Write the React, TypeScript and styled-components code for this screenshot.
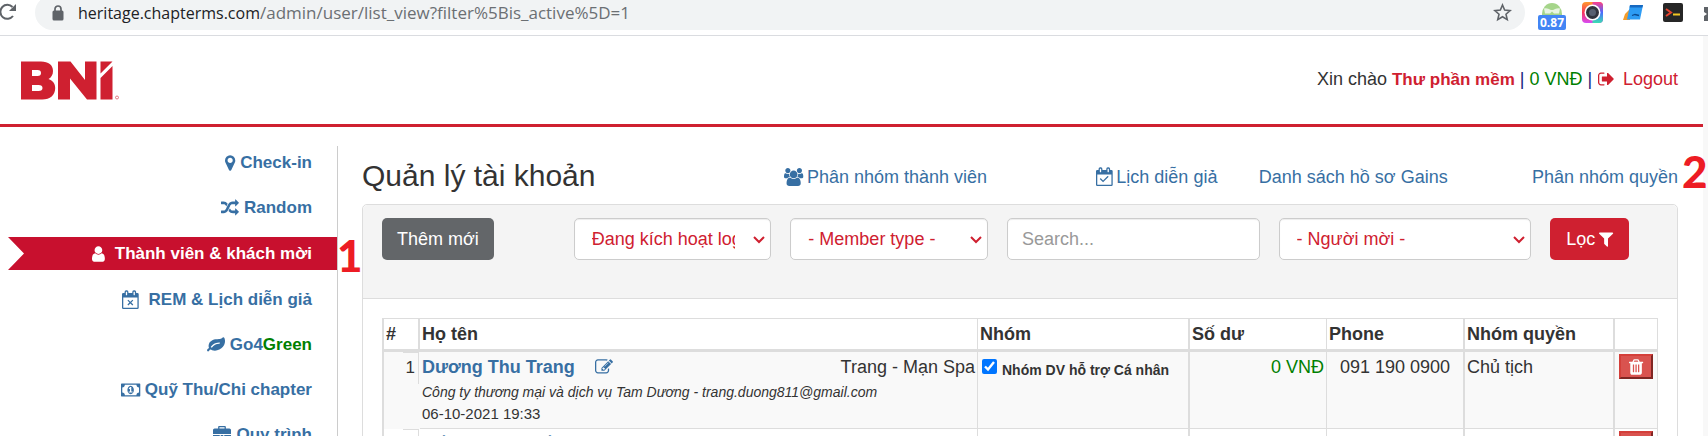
import React from 'react';
import styled, { createGlobalStyle, css } from 'styled-components';

const GlobalStyle = createGlobalStyle`
  *, *::before, *::after { box-sizing: border-box; }
  html, body { margin: 0; height: 100%; overflow: hidden; background: #fff; }
  body {
    font-family: "Liberation Sans", Arial, sans-serif;
    font-size: 18px;
    line-height: 26px;
    color: #333;
  }
  #root { height: 100%; }
  a { color: #376fa3; text-decoration: none; }
`;

/* ---------- icons ---------- */

const GLYPHS = {
  marker: [384, 1024, 'M1152 640q0-106-75-181t-181-75-181 75-75 181 75 181 181 75 181-75 75-181zm256 0q0 109-33 179l-364 774q-16 33-47.5 52t-67.5 19-67.5-19-46.5-52l-365-774q-33-70-33-179 0-212 150-362t362-150 362 150 150 362z'],
  random: [0, 1792, 'M666 481q-60 92-137 273-22-45-37-72.5t-40.5-63.5-51-56.5-63-35-81.5-14.5h-224q-14 0-23-9t-9-23v-192q0-14 9-23t23-9h224q250 0 410 225zm1126 799q0 14-9 23l-320 320q-9 9-23 9-13 0-22.5-9.5t-9.5-22.5v-192q-32 0-85 .5t-81 1-73-1-71-5-64-10.5-63-18.5-58-28.5-59-40-55-53.5-56-69.5q59-93 136-273 22 45 37 72.5t40.5 63.5 51 56.5 63 35 81.5 14.5h256v-192q0-14 9-23t23-9q12 0 24 10l319 319q9 9 9 23zm0-896q0 14-9 23l-320 320q-9 9-23 9-13 0-22.5-9.5t-9.5-22.5v-192h-256q-48 0-87 15t-69 45-51 61.5-45 77.5q-32 62-78 171-29 66-49.5 111t-54 105-64 100-74 83-90 68.5-106.5 42-128 16.5h-224q-14 0-23-9t-9-23v-192q0-14 9-23t23-9h224q48 0 87-15t69-45 51-61.5 45-77.5q32-62 78-171 29-66 49.5-111t54-105 64-100 74-83 90-68.5 106.5-42 128-16.5h256v-192q0-14 9-23t23-9q12 0 24 10l319 319q9 9 9 23z'],
  user: [256, 1280, 'M1536 1399q0 109-62.5 187t-150.5 78h-854q-88 0-150.5-78t-62.5-187q0-85 8.5-160.5t31.5-152 58.5-131 94-89 134.5-34.5q131 128 313 128t313-128q76 0 134.5 34.5t94 89 58.5 131 31.5 152 8.5 160.5zm-256-887q0 159-112.5 271.5t-271.5 112.5-271.5-112.5-112.5-271.5 112.5-271.5 271.5-112.5 271.5 112.5 112.5 271.5z'],
  users: [-64, 1920, 'M529 896q-162 5-265 128h-134q-82 0-138-40.5t-56-118.5q0-353 124-353 6 0 43.5 21t97.5 42.5 119 21.5q67 0 133-23-5 37-5 66 0 139 81 256zm1071 637q0 120-73 189.5t-194 69.5h-874q-121 0-194-69.5t-73-189.5q0-53 3.5-103.5t14-109 26.5-108.5 43-97.5 62-81 85.5-53.5 111.5-20q10 0 43 21.5t73 48 107 48 135 21.5 135-21.5 107-48 73-48 43-21.5q61 0 111.5 20t85.5 53.5 62 81 43 97.5 26.5 108.5 14 109 3.5 103.5zm-1024-1277q0 106-75 181t-181 75-181-75-75-181 75-181 181-75 181 75 75 181zm704 384q0 159-112.5 271.5t-271.5 112.5-271.5-112.5-112.5-271.5 112.5-271.5 271.5-112.5 271.5 112.5 112.5 271.5zm576 225q0 78-56 118.5t-138 40.5h-134q-103-123-265-128 81-117 81-256 0-29-5-66 66 23 133 23 59 0 119-21.5t97.5-42.5 43.5-21q124 0 124 353zm-128-609q0 106-75 181t-181 75-181-75-75-181 75-181 181-75 181 75 75 181z'],
  leaf: [0, 1792, 'M1280 704q0-26-19-45t-45-19q-172 0-318 49.5t-259.5 134-235.5 219.5q-19 21-19 45 0 26 19 45t45 19q24 0 45-19 27-24 74-71t67-66q137-124 268.5-176t313.5-52q26 0 45-19t19-45zm512-198q0 95-20 193-46 224-184.5 383t-357.5 268q-214 108-438 108-148 0-286-47-15-5-88-42t-96-37q-16 0-39.5 32t-45 70-52.5 70-60 32q-43 0-63.5-17.5t-45.5-59.5q-2-4-6-11t-5.5-10-3-9.5-1.5-13.5q0-35 31-73.5t68-65.5 68-56 31-48q0-4-14-38t-16-44q-9-51-9-104 0-115 43.5-220t119-184.5 170.5-139 204-95.5q55-18 145-25.5t179.5-9 178.5-6 163.5-24 113.5-56.5l29.5-29.5 29.5-28 27-20 36.5-16 43.5-4.5q39 0 70.5 46t47.5 112 24 124 8 96z'],
  briefcase: [0, 1792, 'M640 256h512v-128h-512v128zm1152 640v480q0 66-47 113t-113 47h-1472q-66 0-113-47t-47-113v-480h672v160q0 26 19 45t45 19h320q26 0 45-19t19-45v-160h672zm-768 0v128h-256v-128h256zm768-480v384h-1792v-384q0-66 47-113t113-47h352v-160q0-40 28-68t68-28h576q40 0 68 28t28 68v160h352q66 0 113 47t47 113z'],
  signOut: [64, 1664, 'M704 1440q0 4 1 20t.5 26.5-3 23.5-10 19.5-20.5 6.5h-320q-119 0-203.5-84.5t-84.5-203.5v-704q0-119 84.5-203.5t203.5-84.5h320q13 0 22.5 9.5t9.5 22.5q0 4 1 20t.5 26.5-3 23.5-10 19.5-20.5 6.5h-320q-66 0-113 47t-47 113v704q0 66 47 113t113 47h312l11.5 1 11.5 3 8 5.5 7 9 2 13.5zm928-544q0 26-19 45l-544 544q-19 19-45 19t-45-19-19-45v-288h-448q-26 0-45-19t-19-45v-384q0-26 19-45t45-19h448v-288q0-26 19-45t45-19 45 19l544 544q19 19 19 45z'],
  pencil: [0, 1792, 'M888 1184l116-116-152-152-116 116v56h96v96h56zm440-720q-16-16-33 1l-350 350q-17 17-1 33t33-1l350-350q17-17 1-33zm80 594v190q0 119-84.5 203.5t-203.5 84.5h-832q-119 0-203.5-84.5t-84.5-203.5v-832q0-119 84.5-203.5t203.5-84.5h832q63 0 117 25 15 7 18 23 3 17-9 29l-49 49q-14 14-32 8-23-6-45-6h-832q-66 0-113 47t-47 113v832q0 66 47 113t113 47h832q66 0 113-47t47-113v-126q0-13 9-22l64-64q15-15 35-7t20 29zm-96-738l288 288-672 672h-288v-288zm444 132l-92 92-288-288 92-92q28-28 68-28t68 28l152 152q28 28 28 68t-28 68z'],
  filter: [192, 1408, 'M1595 295q17 41-14 70l-493 493v742q0 42-39 59-13 5-25 5-27 0-45-19l-256-256q-19-19-19-45v-486l-493-493q-31-29-14-70 17-39 59-39h1280q42 0 59 39z'],
  trash: [192, 1408, 'M704 1376v-704q0-14-9-23t-23-9h-64q-14 0-23 9t-9 23v704q0 14 9 23t23 9h64q14 0 23-9t9-23zm256 0v-704q0-14-9-23t-23-9h-64q-14 0-23 9t-9 23v704q0 14 9 23t23 9h64q14 0 23-9t9-23zm256 0v-704q0-14-9-23t-23-9h-64q-14 0-23 9t-9 23v704q0 14 9 23t23 9h64q14 0 23-9t9-23zm-544-992h448l-48-117q-7-9-17-11h-317q-10 2-17 11zm928 32v64q0 14-9 23t-23 9h-96v948q0 83-47 143.5t-113 60.5h-832q-66 0-113-58.5t-47-141.5v-952h-96q-14 0-23-9t-9-23v-64q0-14 9-23t23-9h309l70-167q15-37 54-63t79-26h320q40 0 79 26t54 63l70 167h309q14 0 23 9t9 23z'],
  calendarX: [64, 1664, 'M192 1664h1408v-1024h-1408zM576 384v-288q0-32-32-32h-64q-32 0-32 32v288q0 32 32 32h64q32 0 32-32zm768 0v-288q0-32-32-32h-64q-32 0-32 32v288q0 32 32 32h64q32 0 32-32zm384-64v1344q0 128-128 128h-1408q-128 0-128-128v-1344q0-128 128-128h128v-96q0-160 160-160h64q160 0 160 160v96h384v-96q0-160 160-160h64q160 0 160 160v96h128q128 0 128 128zM694 860l202 200 202-200 90 90-200 202 200 202-90 90-202-200-202 200-90-90 200-202-200-202z'],
  calendarCheck: [64, 1664, 'M192 1664h1408v-1024h-1408zM576 384v-288q0-32-32-32h-64q-32 0-32 32v288q0 32 32 32h64q32 0 32-32zm768 0v-288q0-32-32-32h-64q-32 0-32 32v288q0 32 32 32h64q32 0 32-32zm384-64v1344q0 128-128 128h-1408q-128 0-128-128v-1344q0-128 128-128h128v-96q0-160 160-160h64q160 0 160 160v96h384v-96q0-160 160-160h64q160 0 160 160v96h128q128 0 128 128zM1303 892l-512 512q-10 9-23 9t-23-9l-288-288q-9-10-9-23t9-22l46-46q9-9 22-9t23 9l220 220 444-444q10-9 23-9t22 9l46 46q9 9 9 22t-9 23z'],
  money: [-64, 1920, 'M704 1152h384v-96h-128v-448h-114l-148 137 77 80q42-37 55-57h2v288h-128zm512-256q0 70-21 142t-59.5 134-101.5 101-138 39-138-39-101.5-101-59.5-134-21-142 21-142 59.5-134 101.5-101 138-39 138 39 101.5 101 59.5 134 21 142zm512 256v-512q-106 0-181-75t-75-181h-1152q0 106-75 181t-181 75v512q106 0 181 75t75 181h1152q0-106 75-181t181-75zm128-832v1152q0 26-19 45t-45 19h-1792q-26 0-45-19t-19-45v-1152q0-26 19-45t45-19h1792q26 0 45 19t19 45z'],
} as const;

type GlyphName = keyof typeof GLYPHS;

const Svg = styled.svg`
  display: inline-block;
  flex: none;
  height: 18px;
  width: auto;
  fill: currentColor;
  vertical-align: -3px;
  overflow: visible;
`;

function Icon({ name }: { name: GlyphName }) {
  const [x, w, d] = GLYPHS[name];
  return (
    <Svg viewBox={`${x} 0 ${w} 1792`} aria-hidden="true">
      <path d={d} fillRule="evenodd" />
    </Svg>
  );
}

/* ---------- browser bar ---------- */

const BrowserBar = styled.div`
  display: flex;
  align-items: flex-end;
  height: 36px;
  padding-bottom: 5px;
  border-bottom: 1px solid #dadce0;
  overflow: hidden;
  background: #fff;
`;

const Reload = styled.button`
  flex: none;
  width: 35px;
  height: 35px;
  padding: 0;
  border: 0;
  background: none;
  text-align: left;
  svg { display: block; }
`;

const AddressPill = styled.div`
  flex: 1;
  display: flex;
  align-items: center;
  height: 35px;
  padding: 0 13px 0 17px;
  border-radius: 18px;
  background: #f1f3f4;
`;

const Address = styled.div`
  flex: 1;
  margin-left: 14px;
  font-family: "Open Sans", "Segoe UI", sans-serif;
  font-size: 17px;
  line-height: 24px;
  color: #6b6f73;
  white-space: nowrap;
  b { font-size: 16px; font-weight: 400; color: #202124; }
`;

const Extensions = styled.div`
  flex: none;
  display: flex;
  gap: 20px;
  width: 183px;
  height: 30px;
  padding-left: 13px;
  overflow: hidden;
  svg { display: block; flex: none; }
`;

const Badged = styled.div`
  flex: none;
  width: 24px;
`;

function Browser() {
  return (
    <BrowserBar>
      <Reload aria-label="Reload">
        <svg width="18" height="35" viewBox="0 0 18 35" fill="none" stroke="#5f6368" strokeWidth="2">
          <path d="M12.500 12A7 7 0 1 0 13 21" />
          <path d="M16 9v7H9z" fill="#5f6368" stroke="none" />
        </svg>
      </Reload>
      <AddressPill>
        <svg width="12" height="16" viewBox="0 0 12 16" fill="none">
          <rect x="0.5" y="5.5" width="11" height="10" rx="1.5" fill="#5f6368" />
          <path d="M3 6V4a3 3 0 0 1 6 0v2" stroke="#5f6368" strokeWidth="1.7" />
        </svg>
        <Address><b>heritage.chapterms.com</b>/admin/user/list_view?filter%5Bis_active%5D=1</Address>
        <svg width="19" height="19" viewBox="0 0 24 24" fill="none" stroke="#5f6368" strokeWidth="2">
          <path d="M12 2.500l2.700 6.500 7 .6-5.300 4.600 1.600 6.800-6-3.600-6 3.600 1.600-6.800-5.300-4.600 7-.6z" />
        </svg>
      </AddressPill>
      <Extensions>
        <Badged>
          <svg width="28" height="30" viewBox="0 0 28 30">
            <path d="M4 14a10 11 0 0 1 20 0v2H4z" fill="#a5d58a" />
            <path d="M6 8.500q3-1 7 1.500h2q4-2.500 7-1.500l-1 5h-5l-2-2-2 2H7z" fill="#fff" opacity=".75" />
            <rect y="15" width="28" height="15" rx="2" fill="#4285f4" />
            <text x="14" y="27" textAnchor="middle" fontSize="12" fontWeight="700" fontFamily="Open Sans, sans-serif" fill="#fff">0.87</text>
          </svg>
        </Badged>
        <svg width="21" height="24" viewBox="0 0 21 24">
          <defs>
            <linearGradient id="lensWarm" x1="0" y1="0" x2="0" y2="1">
              <stop offset="0" stopColor="#ff9a2e" />
              <stop offset=".5" stopColor="#f8345c" />
              <stop offset="1" stopColor="#d64cf5" />
            </linearGradient>
            <linearGradient id="lensCool" x1="0" y1="0" x2="0" y2="1">
              <stop offset="0" stopColor="#ff3d8b" />
              <stop offset=".5" stopColor="#4a6bff" />
              <stop offset="1" stopColor="#3be0b0" />
            </linearGradient>
          </defs>
          <rect y="2" width="21" height="21" rx="4" fill="url(#lensWarm)" />
          <path d="M10.500 2H17a4 4 0 0 1 4 4v13a4 4 0 0 1-4 4h-6.500z" fill="url(#lensCool)" />
          <circle cx="10.5" cy="12.5" r="8" fill="#fff" />
          <circle cx="10.5" cy="12.5" r="6.5" fill="#30343d" />
          <circle cx="10.5" cy="12.5" r="3.5" fill="#566070" />
        </svg>
        <svg width="20" height="24" viewBox="0 0 20 24">
          <path d="M0 20l2-6 5-5v11z" fill="#f39c2b" />
          <path d="M7 5h13l-3 14.500H4z" fill="#2d9cf4" />
          <path d="M7 5h13l-.6 2.500H6.500z" fill="#1769c0" />
          <path d="M9 15.500l3-1 4 1" fill="none" stroke="#0b4a8f" strokeWidth="1.300" />
        </svg>
        <svg width="20" height="24" viewBox="0 0 20 24">
          <rect y="3" width="20" height="19" rx="2" fill="#262626" />
          <path d="M3 9l5 3.500L3 16" fill="none" stroke="#e8432e" strokeWidth="2" />
          <path d="M10 14.500h7" stroke="#f3c623" strokeWidth="2" />
        </svg>
        <svg width="5" height="24" viewBox="0 0 5 24" fill="#5f6368">
          <path d="M1 7h4v14H1v-5l3-2-3-2z" />
        </svg>
      </Extensions>
    </BrowserBar>
  );
}

/* ---------- page frame ---------- */

const Screen = styled.div`
  display: flex;
  flex-direction: column;
  height: 100%;
  overflow: hidden;
`;

const Page = styled.div`
  flex: 1;
  min-height: 0;
  overflow: hidden;
  padding-right: 5px;
  box-shadow: inset -5px 0 #f8f8f8;
`;

const Header = styled.header`
  display: flex;
  align-items: center;
  justify-content: space-between;
  height: 91px;
  padding: 0 25px 0 21px;
  border-bottom: 3px solid #cf2030;
`;

const Greeting = styled.div`
  margin-bottom: 2px;
  white-space: nowrap;
  a { color: #cf2030; }
  b { font-size: 17px; }
  svg { margin: 0 3px 0 1px; }
`;

const Money = styled.span`
  color: green;
`;

const Bar = styled.span`
  color: #1a237e;
`;

function Logo() {
  return (
    <svg width="98" height="39" viewBox="0 0 98 39" role="img" aria-label="BNI">
      <g fill="#cf2030">
        <path fillRule="evenodd" d="M0 .5h20c7.500 0 12 3.500 12 9.500 0 3.800-1.700 6.500-4.500 8 4.500 1.500 6.700 4.800 6.700 9 0 7-5 11.500-13 11.500H0zM11 9v6h5.500c2.500 0 3.500-1 3.500-3S19 9 16.500 9zM11 24v6h6.500c2.800 0 4-1 4-3s-1.200-3-4-3z" />
        <path d="M37 .5H49.500L64 19V.5h11.500v38H66L49 17.500v21H37z" />
        <path d="M79.500 .5h12L79.500 12.500zM91.500 5v33.500H79.500V17z" />
        <circle cx="96" cy="36.500" r="1.500" fill="none" stroke="#cf2030" strokeWidth=".8" opacity=".7" />
      </g>
    </svg>
  );
}

const Columns = styled.div`
  display: flex;
  align-items: flex-start;
  padding-top: 19px;
`;

/* ---------- side menu ---------- */

const SideMenu = styled.nav`
  position: relative;
  flex: none;
  display: flex;
  flex-direction: column;
  gap: 12px;
  width: 338px;
  padding-left: 8px;
  border-right: 1px solid #ccc;
  font-weight: 700;
`;

const MenuLink = styled.a<{ $active?: boolean; $wide?: boolean }>`
  display: flex;
  align-items: center;
  justify-content: flex-end;
  gap: ${(p) => (p.$wide ? 10 : 5)}px;
  height: 33px;
  padding-right: 25px;
  flex: none;
  font-size: 17px;
  ${(p) => p.$active && css`
    margin: 1px 0;
    color: #fff;
    background: #c8102e;
    clip-path: polygon(0 0, 100% 0, 100% 100%, 0 100%, 16px 50%);
  `}
`;

const Marker = styled.span<{ $side: 'menu' | 'links' }>`
  position: absolute;
  font-family: Lato, Calibri, sans-serif;
  font-weight: 900;
  font-size: 44px;
  line-height: 44px;
  color: #ed1c24;
  ${(p) => (p.$side === 'menu' ? 'left: 337px; top: 87px;' : 'left: 100%; top: -7px; margin-left: 4px;')}
`;

/* ---------- main area ---------- */

const Main = styled.main`
  flex: 1;
  min-width: 0;
  padding: 10px 25px 0 24px;
`;

const TitleRow = styled.div`
  position: relative;
  display: grid;
  grid-template-columns: 1fr repeat(4, 17.5%);
  align-items: center;
  height: 40px;
  margin-bottom: 8px;
  white-space: nowrap;
`;

const Title = styled.h1`
  margin: 0;
  font-size: 30px;
  line-height: 40px;
  font-weight: 400;
`;

const TopLink = styled.a`
  justify-self: end;
  display: flex;
  align-items: center;
  gap: 4px;
  padding-top: 2px;
`;

const Panel = styled.section`
  border: 1px solid #ddd;
  border-radius: 5px;
  background: #fff;
`;

const Filters = styled.form`
  display: grid;
  grid-template-columns: 173fr 198fr 198fr 253fr 253fr 108fr;
  gap: 19px;
  justify-items: start;
  height: 94px;
  padding: 13px 19px 0;
  border-bottom: 1px solid #ddd;
  border-radius: 5px 5px 0 0;
  background: #f4f4f4;
`;

const Button = styled.button<{ $tone: 'grey' | 'red' }>`
  display: flex;
  align-items: center;
  gap: 4px;
  height: 42px;
  padding: 0 ${(p) => (p.$tone === 'grey' ? 15 : 16)}px;
  border: 0;
  border-radius: 5px;
  font: inherit;
  color: #fff;
  background: ${(p) => (p.$tone === 'grey' ? '#636669' : '#cf2030')};
`;

const field = css`
  width: 100%;
  height: 42px;
  border: 1px solid #ccc;
  border-radius: 5px;
  font: inherit;
  background-color: #fff;
  box-shadow: inset 0 1px 1px rgba(0, 0, 0, 0.075);
`;

const SelectWrap = styled.div`
  position: relative;
  width: 100%;
  color: #cf2030;
  svg { position: absolute; right: 6px; top: 18px; pointer-events: none; }
`;

const Select = styled.select`
  ${field}
  appearance: none;
  padding: 0 35px 0 17px;
  color: inherit;
`;

const Search = styled.input`
  ${field}
  padding: 0 14px;
  &::placeholder { color: #999; opacity: 1; }
`;

function Dropdown({ label, value }: { label: string; value: string }) {
  return (
    <SelectWrap>
      <Select aria-label={label}>
        <option>{value}</option>
      </Select>
      <svg width="12" height="8" viewBox="0 0 12 8" fill="none" stroke="currentColor" strokeWidth="2">
        <path d="M1 1l5 5 5-5" />
      </svg>
    </SelectWrap>
  );
}

/* ---------- members table ---------- */

const TableBox = styled.div`
  padding: 19px;
`;

const Table = styled.table`
  width: 100%;
  table-layout: fixed;
  border-collapse: separate;
  border-spacing: 0;
  border: 1px solid #ddd;
  border-left-width: 2px;
`;

const Col = styled.col<{ $w?: number }>`
  width: ${(p) => (p.$w ? `${p.$w}px` : 'auto')};
`;

const Th = styled.th<{ $line?: number }>`
  height: 33px;
  padding: 0 2px;
  text-align: left;
  border-right: ${(p) => p.$line ?? 0}px solid #ddd;
  border-bottom: 3px solid #ddd;
`;

const Row = styled.tr`
  &:nth-child(odd) { background: #f9f9f9; }
`;

const Td = styled.td<{ $line?: number; $align?: string; $plain?: boolean }>`
  height: 77px;
  padding: ${(p) => (p.$plain ? '0 1px 0 0' : '2px 2px 0')};
  vertical-align: top;
  text-align: ${(p) => p.$align ?? 'left'};
  border-right: ${(p) => p.$line ?? 0}px solid #ddd;
  border-bottom: ${(p) => (p.$plain ? 0 : 1)}px solid #ddd;
`;

const NumberBox = styled.div`
  width: 16px;
  height: 32px;
  margin-left: auto;
  padding: 2px 3px 0 0;
  border: solid #ddd;
  border-width: 1px 1px 0 0;
  font-size: 17px;
  text-align: right;
`;

const NameLine = styled.div`
  display: flex;
  align-items: center;
  gap: 20px;
  line-height: 26px;
  span { margin-left: auto; }
`;

const Company = styled.div`
  font-size: 14px;
  line-height: 24px;
  font-style: italic;
  white-space: nowrap;
`;

const Joined = styled.div`
  font-size: 15px;
  line-height: 20px;
`;

const GroupLabel = styled.label`
  display: flex;
  align-items: flex-start;
  gap: 5px;
  padding-top: 3px;
  font-size: 14px;
  line-height: 26px;
  font-weight: 700;
  input { flex: none; width: 15px; height: 15px; margin: 2px 0 0 2px; accent-color: #0075ff; }
`;

const DeleteButton = styled.button`
  display: flex;
  align-items: center;
  justify-content: center;
  width: 34px;
  height: 25px;
  margin: 0 auto;
  padding: 0;
  border: 2px outset #d43f3a;
  color: #fff;
  background: #d9534f;
`;

interface Member {
  no: number;
  name: string;
  alias?: string;
  company?: string;
  joined?: string;
  group?: string;
  balance?: string;
  phone?: string;
  role?: string;
}

const MEMBERS: Member[] = [
  {
    no: 1,
    name: 'Dương Thu Trang',
    alias: 'Trang - Mạn Spa',
    company: 'Công ty thương mại và dịch vụ Tam Dương - trang.duong811@gmail.com',
    joined: '06-10-2021 19:33',
    group: 'Nhóm DV hỗ trợ Cá nhân',
    balance: '0 VNĐ',
    phone: '091 190 0900',
    role: 'Chủ tịch',
  },
  { no: 2, name: 'Cấn Quang Hiếu Thu' },
];

const DeleteCell = styled(Td)`
  padding-top: 2px;
`;

function MemberRow({ m }: { m: Member }) {
  return (
    <Row>
      <Td $plain><NumberBox>{m.no}</NumberBox></Td>
      <Td $line={1}>
        <NameLine>
          <a href="#member"><b>{m.name}</b></a>
          <a href="#edit" aria-label="Edit"><Icon name="pencil" /></a>
          {m.alias && <span>{m.alias}</span>}
        </NameLine>
        {m.company && <Company>{m.company}</Company>}
        {m.joined && <Joined>{m.joined}</Joined>}
      </Td>
      <Td $line={2}>
        {m.group && <GroupLabel><input type="checkbox" defaultChecked />{m.group}</GroupLabel>}
      </Td>
      <Td $line={1} $align="right"><Money>{m.balance}</Money></Td>
      <Td $line={2} $align="center">{m.phone}</Td>
      <Td $line={2}>{m.role}</Td>
      <DeleteCell><DeleteButton aria-label="Delete"><Icon name="trash" /></DeleteButton></DeleteCell>
    </Row>
  );
}

export default function App() {
  return (
    <Screen>
      <GlobalStyle />
      <Browser />
      <Page>
        <Header>
          <Logo />
          <Greeting>
            Xin chào <a href="#me"><b>Thư phần mềm</b></a> <Bar>|</Bar> <Money>0 VNĐ</Money> <Bar>|</Bar>{' '}
            <a href="#logout"><Icon name="signOut" /> Logout</a>
          </Greeting>
        </Header>
        <Columns>
          <SideMenu>
            <MenuLink href="#checkin"><Icon name="marker" />Check-in</MenuLink>
            <MenuLink href="#random"><Icon name="random" />Random</MenuLink>
            <MenuLink href="#members" $active $wide><Icon name="user" />Thành viên &amp; khách mời</MenuLink>
            <MenuLink href="#rem" $wide><Icon name="calendarX" />REM &amp; Lịch diễn giả</MenuLink>
            <MenuLink href="#green"><Icon name="leaf" /><span>Go4<Money>Green</Money></span></MenuLink>
            <MenuLink href="#fund"><Icon name="money" />Quỹ Thu/Chi chapter</MenuLink>
            <MenuLink href="#process"><Icon name="briefcase" />Quy trình</MenuLink>
            <Marker $side="menu">1</Marker>
          </SideMenu>
          <Main>
            <TitleRow>
              <Title>Quản lý tài khoản</Title>
              <TopLink href="#groups"><Icon name="users" />Phân nhóm thành viên</TopLink>
              <TopLink href="#calendar"><Icon name="calendarCheck" />Lịch diễn giả</TopLink>
              <TopLink href="#gains">Danh sách hồ sơ Gains</TopLink>
              <TopLink href="#roles">Phân nhóm quyền</TopLink>
              <Marker $side="links">2</Marker>
            </TitleRow>
            <Panel>
              <Filters>
                <Button type="button" $tone="grey">Thêm mới</Button>
                <Dropdown label="Trạng thái" value="Đang kích hoạt login" />
                <Dropdown label="Member type" value="- Member type -" />
                <Search type="text" aria-label="Search" placeholder="Search..." />
                <Dropdown label="Người mời" value="- Người mời -" />
                <Button type="button" $tone="red">Lọc <Icon name="filter" /></Button>
              </Filters>
              <TableBox>
                <Table>
                  <colgroup>
                    <Col $w={36} />
                    <Col />
                    <Col $w={212} />
                    <Col $w={137} />
                    <Col $w={138} />
                    <Col $w={150} />
                    <Col $w={42} />
                  </colgroup>
                  <thead>
                    <tr>
                      <Th $line={2}>#</Th>
                      <Th $line={1}>Họ tên</Th>
                      <Th $line={2}>Nhóm</Th>
                      <Th $line={1}>Số dư</Th>
                      <Th $line={2}>Phone</Th>
                      <Th $line={2}>Nhóm quyền</Th>
                      <Th aria-label="Actions" />
                    </tr>
                  </thead>
                  <tbody>
                    {MEMBERS.map((m) => <MemberRow key={m.no} m={m} />)}
                  </tbody>
                </Table>
              </TableBox>
            </Panel>
          </Main>
        </Columns>
      </Page>
    </Screen>
  );
}
